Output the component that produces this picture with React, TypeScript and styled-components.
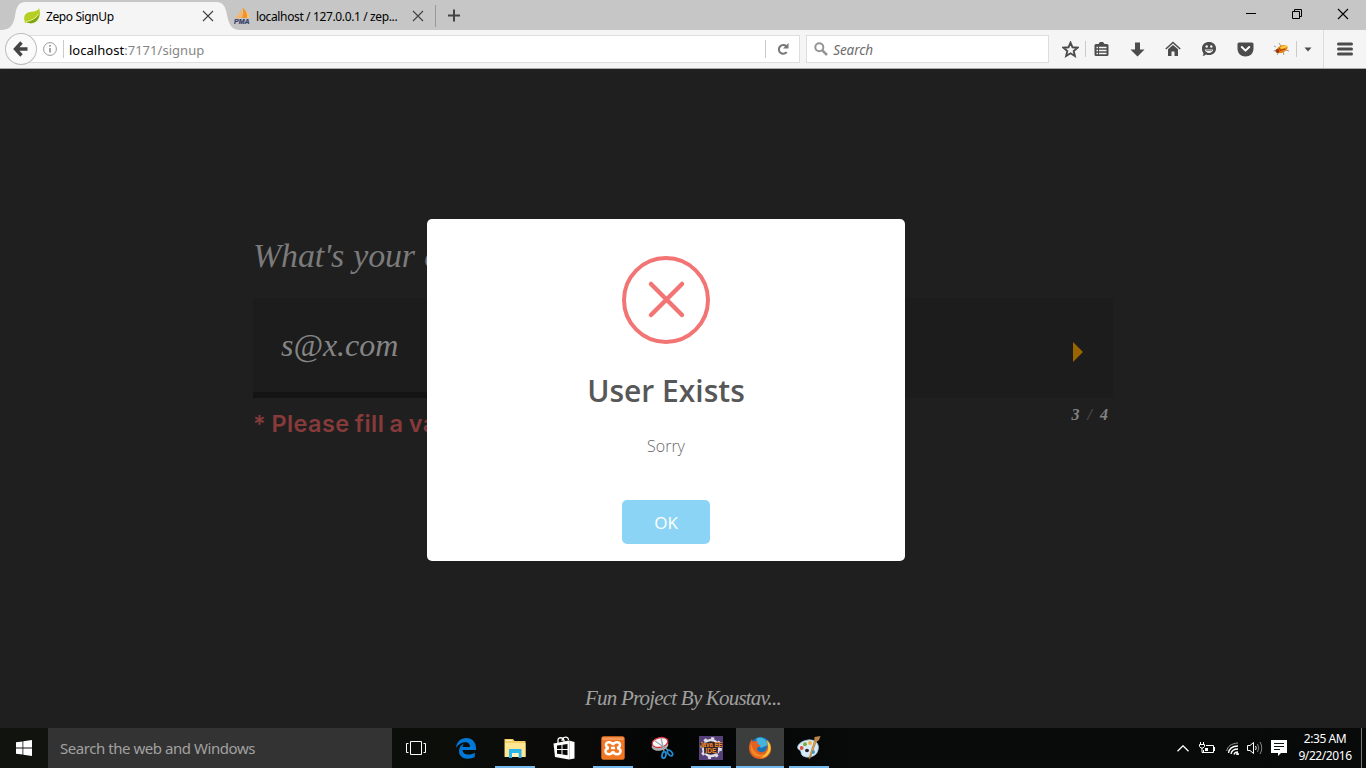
import React from 'react';
import styled, { createGlobalStyle } from 'styled-components';

const GlobalStyle = createGlobalStyle`
  * { box-sizing: border-box; }
  body { margin: 0; overflow: hidden; background: #1f1f1f; }
`;

const ui = `"Noto Sans", "Open Sans", sans-serif`;
const script = `"Liberation Serif", serif`;

const Screen = styled.div`
  width: 1366px;
  height: 768px;
  display: flex;
  flex-direction: column;
  font-family: ${ui};
  overflow: hidden;
`;

/* ---------- window title bar and tabs ---------- */
const TitleBar = styled.div`
  height: 30px;
  flex: none;
  background: #c6c6c6;
  display: flex;
`;

const Tab = styled.div<{ $width: number; $pad: number }>`
  position: relative;
  width: ${p => p.$width}px;
  height: 30px;
  padding-left: ${p => p.$pad}px;
  padding-top: 2px;
  display: flex;
  align-items: center;
  font-size: 12px;
  color: #000;
  white-space: nowrap;
`;

const TabShape = styled.svg`
  position: absolute;
  left: 0;
  top: 0;
`;

const TabTitle = styled.span<{ $width: number; $spacing: number }>`
  position: relative;
  width: ${p => p.$width}px;
  margin-left: 6px;
  letter-spacing: ${p => p.$spacing}px;
`;

const Glyph = styled.svg`
  position: relative;
  display: block;
  flex: none;
`;

const NewTab = styled.div`
  height: 22px;
  margin-top: 5px;
  padding: 4px 0 0 12px;
  border-left: 1px solid #999;
`;

const WindowButtons = styled.div`
  margin-left: auto;
  display: flex;
`;

const WindowButton = styled.div`
  width: 46px;
  height: 28px;
  display: grid;
  place-items: center;
`;

/* ---------- navigation bar ---------- */
const NavBar = styled.div`
  height: 39px;
  flex: none;
  display: flex;
  align-items: center;
  background: #f5f5f5;
  border-bottom: 1px solid #aaa;
`;

const BackButton = styled.div`
  position: relative;
  width: 32px;
  height: 32px;
  margin-left: 5px;
  border: 1px solid #bdbdbd;
  border-radius: 50%;
  background: #fafafa;
  display: grid;
  place-items: center;
  z-index: 1;
`;

const Field = styled.div<{ $width: number; $left: number; $pad: number }>`
  width: ${p => p.$width}px;
  height: 28px;
  margin-left: ${p => p.$left}px;
  padding-left: ${p => p.$pad}px;
  border: 1px solid #dedede;
  background: #fff;
  display: flex;
  align-items: center;
`;

const Rule = styled.i<{ $h: number; $ml?: number; $mr?: number; $light?: boolean }>`
  width: 1px;
  height: ${p => p.$h}px;
  margin-left: ${p => p.$ml || 0}px;
  margin-right: ${p => p.$mr || 0}px;
  background: ${p => (p.$light ? '#dcdcdc' : '#cbcbcb')};
  flex: none;
`;

const Address = styled.span`
  flex: 1;
  font-size: 13px;
  letter-spacing: 0.03px;
  color: #858585;
  padding-top: 1px;
  b { font-weight: 400; color: #000; }
`;

const Reload = styled.div`
  width: 33px;
  display: grid;
  place-items: center;
`;

const Placeholder = styled.span`
  margin-left: 5px;
  font: italic 13.5px ${ui};
  letter-spacing: -0.1px;
  color: #6d6d6d;
  padding-top: 1px;
`;

const Tools = styled.div`
  display: flex;
  align-items: center;
  height: 38px;
  margin-left: 12px;
`;

const Tool = styled.div<{ $w?: number }>`
  width: ${p => p.$w || 36}px;
  display: grid;
  place-items: center;
`;

/* ---------- web page ---------- */
const Page = styled.main`
  position: relative;
  height: 659px;
  flex: none;
  background: #1f1f1f;
  display: flex;
  flex-direction: column;
  padding: 160px 253px 0;
`;

const Question = styled.div`
  height: 69px;
  font: italic 34px/54px ${script};
  letter-spacing: -0.2px;
  word-spacing: 1px;
  color: #7b7b7b;
  white-space: nowrap;
`;

const Answer = styled.div`
  height: 94px;
  padding: 0 30px 0 28px;
  background: #1c1c1c;
  display: flex;
  align-items: center;
  justify-content: space-between;
  font: italic 32px/40px ${script};
  color: #858585;
`;

const ProgressTrack = styled.div`
  height: 6px;
  background: #1c1c1c;
`;

const Progress = styled.div`
  width: 50%;
  height: 6px;
  background: #141414;
`;

const Arrow = styled.i`
  margin-top: 14px;
  border-left: 10px solid #996300;
  border-top: 10px solid transparent;
  border-bottom: 10px solid transparent;
`;

const FormFoot = styled.div`
  display: flex;
  justify-content: space-between;
  padding: 8px 5px 0 0;
`;

const ErrorText = styled.span`
  font: 600 23.5px/36px Inter, sans-serif;
  letter-spacing: 0.4px;
  word-spacing: -1px;
  color: #873a3a;
  white-space: nowrap;
`;

const Counter = styled.span`
  font: italic bold 16px/18px ${script};
  color: #828282;
  display: flex;
  gap: 8px;
  i { color: #4b4b4b; }
`;

const Footer = styled.footer`
  margin-top: auto;
  height: 50px;
  text-align: center;
  font: italic 21px/40px ${script};
  letter-spacing: -0.8px;
  color: #a0a0a0;
`;

const Dialog = styled.section`
  position: absolute;
  left: 427px;
  top: 150px;
  width: 478px;
  height: 342px;
  border-radius: 5px;
  background: #fff;
  padding-top: 37px;
  display: flex;
  flex-direction: column;
  align-items: center;
  font-family: "Open Sans", sans-serif;
`;

const DialogTitle = styled.h2`
  margin: 27px 0 0;
  font-size: 30px;
  line-height: 40px;
  font-weight: 600;
  color: #575757;
`;

const DialogText = styled.p`
  margin: 25px 0 0;
  font-size: 16px;
  line-height: 20px;
  font-weight: 300;
  color: #686868;
`;

const OkButton = styled.button`
  margin-top: 44px;
  width: 88px;
  height: 44px;
  border: 0;
  border-radius: 5px;
  background: #8cd4f5;
  color: #fff;
  font: 400 17px "Open Sans", sans-serif;
`;

/* ---------- taskbar ---------- */
const Taskbar = styled.div`
  height: 40px;
  flex: none;
  display: flex;
  background: linear-gradient(90deg, #11130f 0, #0c0e09 400px, #0b0c0a 560px, #030404 660px, #090a0a 880px, #080a0a 1366px);
`;

const StartButton = styled.div`
  width: 48px;
  display: grid;
  place-items: center;
`;

const TaskSearch = styled.div`
  width: 344px;
  background: #333;
  color: #a1a1a1;
  font-size: 15px;
  line-height: 40px;
  padding-left: 12px;
  letter-spacing: -0.45px;
`;

const TaskList = styled.div`
  display: flex;
  gap: 1px;
`;

const Task = styled.div<{ $open?: boolean; $active?: boolean }>`
  width: 48px;
  display: flex;
  flex-direction: column;
  align-items: center;
  justify-content: space-between;
  padding-top: 8px;
  background: ${p => (p.$active ? '#3c3e3d' : 'transparent')};
  &:not(:first-child) {
    position: relative;
    left: 1px;
  }
  &::after {
    content: '';
    width: ${p => (p.$active ? 48 : 40)}px;
    height: 2px;
    background: ${p => (p.$open || p.$active ? '#76b9ed' : 'transparent')};
  }
`;

const Tray = styled.div`
  margin-left: auto;
  display: flex;
  align-items: center;
`;

const Clock = styled.div`
  width: 62px;
  margin-left: 1px;
  text-align: center;
  color: #fff;
  font-size: 12px;
  line-height: 17px;
  letter-spacing: -0.42px;
  padding-bottom: 2px;
`;

const ShowDesktop = styled.div`
  width: 5px;
  height: 40px;
  margin-left: 5px;
  border-left: 1px solid #777;
`;

const CloseX = ({ color = '#444', size = 12, w = 1.2 }) => (
  <Glyph width={size} height={size} viewBox="0 0 12 12" fill="none" stroke={color} strokeWidth={w}>
    <path d="M1 1L11 11M11 1L1 11" />
  </Glyph>
);

const LeafIcon = () => (
  <Glyph width="16" height="16" viewBox="0 0 16 16">
    <path d="M15.2 .3C16.600 5 16 10 13 13C10 16 5 15.500 2.200 14.500L1 15L.8 13.500C-.5 10 0 6.500 3.500 4.700C6.500 3.200 13 4.500 15.200 .3Z" fill="#b7cf22" />
    <path d="M2.500 13.800C7 13.300 12.500 11 15.300 6C15.300 10 12.500 14 8.500 15C6 15.500 3.700 15.200 2.500 13.800Z" fill="#7ba51a" />
    <path d="M2 13.600C7.500 12.500 12 10.500 14.300 6" fill="none" stroke="#edf3a2" strokeWidth=".8" />
  </Glyph>
);

const PmaIcon = () => (
  <Glyph width="16" height="16" viewBox="0 0 16 16">
    <path d="M6.500 1C8 4 8 7 7.500 10H1.500C4.500 8 6 5 6.500 1Z" fill="#fbb45f" />
    <path d="M8.500 0C12 2 13.500 6 13 10H8Q10 5 8.500 0Z" fill="#f7941d" />
    <path d="M12.500 3C15 5 16 8 15.500 10H13.500Z" fill="#fbc27a" />
    <text x="0" y="15.500" fontFamily="Liberation Sans" fontWeight="bold" fontStyle="italic" fontSize="6.500" fill="#38406a" stroke="#38406a" strokeWidth=".25" textLength="15.500" lengthAdjust="spacingAndGlyphs">PMA</text>
  </Glyph>
);

const Pen = '#4c4c4c';

const BrowserTools = () => (
  <Tools>
    <Tool $w={18}>
      <Glyph width="17" height="17" viewBox="0 0 17 17" fill="none" stroke={Pen} strokeWidth="1.9">
        <path d="M8.500 1.700L10.500 6.300L15.500 6.700L11.700 10L12.900 15L8.500 12.300L4.100 15L5.300 10L1.500 6.700L6.500 6.300Z" />
      </Glyph>
    </Tool>
    <Rule $h={16} $ml={6} $mr={-3} />
    <Tool $w={36}>
      <Glyph width="15" height="16" viewBox="0 0 15 16">
        <path d="M2 3H4.500L6 1H9L10.500 3H13Q14.500 3 14.500 4.500V13.500Q14.500 15 13 15H2Q.5 15 .5 13.500V4.500Q.5 3 2 3Z" fill={Pen} />
        <path d="M2.500 6.500H4M5 6.500H12.500M2.500 9.500H4M5 9.500H12.500M2.500 12.500H4M5 12.500H12.500" stroke="#f5f5f5" strokeWidth="1.600" />
      </Glyph>
    </Tool>
    <Tool>
      <Glyph width="15" height="15" viewBox="0 0 15 15"><path d="M5 .5H10V7.500H14.500L7.500 14.500L.5 7.500H5Z" fill={Pen} /></Glyph>
    </Tool>
    <Tool>
      <Glyph width="16" height="16" viewBox="0 0 16 16">
        <path d="M.8 8L8 1.500L15.200 8" fill="none" stroke={Pen} strokeWidth="1.5" />
        <path d="M3 8.300L8 3.900L13 8.300V15H9.500V10.500H6.500V15H3Z" fill={Pen} />
      </Glyph>
    </Tool>
    <Tool>
      <Glyph width="16" height="16" viewBox="0 0 16 16">
        <path d="M8 1C12 1 15 3.600 15 7.500S12 14 8 14C6.800 14 5.800 13.800 5 13.400C4 14.300 2.700 14.800 1.500 14.700C2.300 13.900 2.500 12.900 2.400 11.900C1.400 10.700 1 9.200 1 7.500C1 3.600 4 1 8 1Z" fill={Pen} />
        <path d="M3.800 8.500H12.200C11.500 13 4.500 13 3.800 8.500Z" fill="#f5f5f5" /><path d="M5 9.500H11" stroke={Pen} strokeWidth=".6" />
        <circle cx="5.700" cy="5.500" r="1.200" fill="#f5f5f5" /><circle cx="10.300" cy="5.500" r="1.200" fill="#f5f5f5" />
      </Glyph>
    </Tool>
    <Tool>
      <Glyph width="17" height="15" viewBox="0 0 17 15">
        <path d="M2 .5H15Q16.500.5 16.500 2V6.500C16.500 11.500 13 14.500 8.500 14.500S.5 11.500.5 6.500V2Q.5.5 2 .5Z" fill={Pen} />
        <path d="M4.800 5L8.500 8.600L12.200 5" fill="none" stroke="#fff" strokeWidth="2" strokeLinecap="round" strokeLinejoin="round" />
      </Glyph>
    </Tool>
    <Tool>
      <Glyph width="17" height="15" viewBox="0 0 17 15">
        <path d="M3 5L1 4M4 8L.5 9M6 10L4 13M10 10L11 13M13 8L16 9M8 4L6 1" stroke="#8b8170" strokeWidth=".8" />
        <ellipse cx="9" cy="7" rx="6" ry="3.500" transform="rotate(-25 9 7)" fill="#e98214" />
        <path d="M7 5.500L13.500 2.800L14 5L9 7Z" fill="#ffd13e" />
        <circle cx="4.500" cy="9" r="2" fill="#97370b" /><path d="M8 8L12 7M6 6L8 9" stroke="#9c3c08" />
      </Glyph>
    </Tool>
    <Rule $h={16} $ml={-3} />
    <Tool $w={21}>
      <Glyph width="8" height="5" viewBox="0 0 8 5"><path d="M.5.5H7.500L4 4.500Z" fill={Pen} /></Glyph>
    </Tool>
    <Rule $h={38} $ml={5} $light />
    <Tool $w={42}>
      <Glyph width="16" height="14" viewBox="0 0 16 14"><path d="M1.500 2H14.500M1.500 7H14.500M1.500 12H14.500" stroke={Pen} strokeWidth="3" strokeLinecap="round" /></Glyph>
    </Tool>
  </Tools>
);

const TaskIcons = () => (
  <TaskList>
    <Task>
      <Glyph width="24" height="24" viewBox="0 0 24 24" fill="none" stroke="#fff" strokeWidth="1">
        <path d="M6.500 5.500H17.500V18.500H6.500ZM4.500 7.500H2.500V16.500H4.500M19.500 7.500H21.500V16.500H19.500" />
      </Glyph>
    </Task>
    <Task>
      <Glyph width="24" height="24" viewBox="0 0 24 24">
        <path d="M2 11.800C2.700 5.800 6.600 2 12.300 2C18.500 2 22 6.500 22 12V14H8.500C8.700 17 11 18.500 14.500 18.500C17 18.500 19 17.800 20.800 16.700V21C18.800 22 16.500 22.700 13.500 22.700C8.500 22.700 5 19.700 5 15C5 11.500 6.800 8.900 9.900 7.400C8.900 8.600 8.600 9.700 8.500 10.900H16C16 8 14.500 6.200 11.400 6.200C7.700 6.200 4.500 8.200 2 11.800Z" fill="#0078d7" />
      </Glyph>
    </Task>
    <Task $open>
      <Glyph width="24" height="24" viewBox="0 0 24 24">
        <path d="M1.500 3H10L11.500 5H22.500V21H1.500Z" fill="#f5cf64" /><path d="M2 7H22.500V21H2Z" fill="#ffe694" />
        <path d="M3 4.500H9" stroke="#fff1bd" /><path d="M6 13H18.500V22H15.500V17H9V22H6Z" fill="#2ab6ec" /><path d="M9 17H15.500V21H9Z" fill="#fff0c0" />
      </Glyph>
    </Task>
    <Task>
      <Glyph width="24" height="24" viewBox="0 0 24 24">
        <path d="M6 7V4C6 1 11 .8 12 4.500V6M10 5C10.500 0 16.500 0 16.500 4" fill="none" stroke="#fff" strokeWidth="1.300" />
        <path d="M1.500 7.500L17 4.500L22.500 6V22.500L17 23.500L3 21Z" fill="#fff" />
        <path d="M5 9.500L9.500 8.900V13H5ZM10.500 8.700L15.500 8V13H10.500ZM5 14H9.500V18.300L5 17.700ZM10.500 14H15.500V19.200L10.500 18.500Z" fill="#080908" />
        <path d="M17.500 5V23" stroke="#999" strokeWidth=".5" />
      </Glyph>
    </Task>
    <Task $open>
      <Glyph width="24" height="24" viewBox="0 0 24 24">
        <rect x=".3" y=".3" width="23.400" height="23.400" rx="2.500" fill="#f17722" /><path d="M1.500 1.500H22.500V4H1.500Z" fill="#f59a5c" />
        <path d="M12 9.200C11.500 5.500 5 5 5 8.700C5 10.600 6 11.500 7.800 12C5.500 12.300 4.500 14 4.500 15.300C4.500 19.200 11 19.200 12 15.200C13 19.200 19.500 19.200 19.500 15.300C19.500 14 18.500 12.300 16.200 12C18 11.500 19 10.600 19 8.700C19 5 12.500 5.500 12 9.200ZM10 12H14" fill="none" stroke="#fff" strokeWidth="2.500" />
      </Glyph>
    </Task>
    <Task>
      <Glyph width="24" height="24" viewBox="0 0 24 24">
        <ellipse cx="10" cy="9.500" rx="8.500" ry="5" fill="#aeb0b2" transform="rotate(-12 10 9.500)" />
        <ellipse cx="10" cy="6.500" rx="8" ry="4.800" fill="#f7f7f7" stroke="#d7343d" strokeWidth="1.300" transform="rotate(-12 10 6.500)" />
        <path d="M5 5L18 14M11 2L14 15" stroke="#9ba7b3" strokeWidth="1.300" />
        <ellipse cx="14" cy="19" rx="1.900" ry="3.300" fill="none" stroke="#238ad0" strokeWidth="1.800" transform="rotate(12 14 19)" />
        <ellipse cx="20" cy="17" rx="1.900" ry="3.300" fill="none" stroke="#238ad0" strokeWidth="1.800" transform="rotate(-40 20 17)" />
      </Glyph>
    </Task>
    <Task $open>
      <Glyph width="24" height="24" viewBox="0 0 24 24">
        <rect width="24" height="24" fill="#564078" />
        <circle cx="12" cy="12" r="8" fill="#272330" stroke="#e1dee8" strokeWidth="2.300" />
        <circle cx="12" cy="12" r="9.700" fill="none" stroke="#e1dee8" strokeWidth="2.500" strokeDasharray="3 4.600" />
        <path d="M1 6.500H23V11.500H19V17.500H5V11.500H1Z" fill="#352331" opacity=".85" />
        <text x=".5" y="11.300" textLength="23" lengthAdjust="spacingAndGlyphs" fontFamily="Liberation Sans" fontWeight="bold" fontSize="7" fill="#f58a22">Java EE</text>
        <text x="6.500" y="17.300" textLength="11" lengthAdjust="spacingAndGlyphs" fontFamily="Liberation Sans" fontWeight="bold" fontSize="7.200" fill="#f58a22">IDE</text>
      </Glyph>
    </Task>
    <Task $active>
      <Glyph width="24" height="24" viewBox="0 0 24 24">
        <circle cx="12.500" cy="11.500" r="10.500" fill="#1672b9" /><path d="M9 2C14 0 19 4 20 9L13 12L8 6Z" fill="#42b5df" />
        <path d="M18.500 4C20 7 20 11 18 14C15.500 17.500 10.500 16.500 9 13.500C8.500 12 10 10.500 12 10.500L12.500 9L9 8L10 5.500C8 4.500 6 4.800 4.800 5.800L4 3C2 5.500 1 8.500 1 12C1 18.500 6 23 12.200 23C18.500 23 23 18.500 23.200 13C23.400 9 21.500 5.800 18.500 4Z" fill="#e66020" />
        <path d="M18.500 4C22.500 7 23.800 12 21.500 16.500C19 21 15 22 12 21.500C17 20 21 15 20 10C20 8 19.500 6 18.500 4Z" fill="#f9ca35" />
        <path d="M3 7C4 11 5 15 10 18C14 20 17 18 18 16C16 22 7 22 4 17C2.500 14 2.500 10 3 7Z" fill="#f28a23" />
      </Glyph>
    </Task>
    <Task $open>
      <Glyph width="24" height="24" viewBox="0 0 24 24">
        <path d="M11 4C18 3 23 8 21 14C20 20 12 23 6 20C3 18 5 15 2.500 14C-2 12 2 5 11 4Z" fill="#d9ebf6" stroke="#9ac3dc" strokeWidth=".8" />
        <circle cx="4.700" cy="12" r="1.900" fill="#de5044" /><circle cx="8" cy="8.300" r="2" fill="#76ae42" /><circle cx="13" cy="7" r="1.900" fill="#f5ae36" />
        <ellipse cx="10" cy="14.500" rx="2" ry="1.700" fill="#24282a" /><circle cx="16" cy="16" r="2" fill="#379ed5" />
        <path d="M19.500 5L13 22.500L12 23L12.300 21L17.500 4.500Z" fill="#dba353" stroke="#96602a" strokeWidth=".5" />
        <path d="M17.300 5L17.500 1L23.500 0L22 4L19.500 6Z" fill="#bb8347" />
      </Glyph>
    </Task>
  </TaskList>
);

export default function App() {
  return (
    <Screen>
      <GlobalStyle />
      <TitleBar>
        <Tab $width={234} $pad={24}>
          <TabShape width="242" height="30" viewBox="0 0 242 30"><path d="M2 30C11 29.500 13.500 24 15 16C16.500 6 19 2 26 2H216C223 2 225.500 6 227 15C229 25 232 30 240 30Z" fill="#f5f5f5" /></TabShape>
          <LeafIcon />
          <TabTitle $width={156} $spacing={-0.4}>Zepo SignUp</TabTitle>
          <CloseX />
        </Tab>
        <Tab $width={201} $pad={0}>
          <PmaIcon />
          <TabTitle $width={156} $spacing={-0.37}>localhost / 127.0.0.1 / zep...</TabTitle>
          <CloseX />
        </Tab>
        <NewTab><Glyph width="12" height="13" viewBox="0 0 12 13"><path d="M6 .5V12.500M0 6.500H12" stroke="#444" strokeWidth="2" /></Glyph></NewTab>
        <WindowButtons>
          <WindowButton><Glyph width="10" height="10"><path d="M0 4.500H10" stroke="#000" /></Glyph></WindowButton>
          <WindowButton><Glyph width="10" height="10" fill="none" stroke="#000"><path d="M.5 2.500H7.500V9.500H.5ZM2.500 2.500V.5H9.500V7.500H7.500" /></Glyph></WindowButton>
          <WindowButton><CloseX color="#000" size={12} w={1.1} /></WindowButton>
        </WindowButtons>
      </TitleBar>
      <NavBar>
        <BackButton>
          <Glyph width="15" height="16" viewBox="0 0 15 16" fill="none" stroke="#444" strokeWidth="3.400"><path d="M8.500 1.500L2.500 8L8.500 14.500M3 8H14.500" /></Glyph>
        </BackButton>
        <Field $width={780} $left={-16} $pad={21}>
          <Glyph width="14" height="14" viewBox="0 0 14 14"><circle cx="7" cy="7" r="6.400" fill="none" stroke="#999" /><path d="M7 6V10.500M7 3V4.700" stroke="#888" strokeWidth="1.500" /></Glyph>
          <Rule $h={18} $ml={6} $mr={5} />
          <Address><b>localhost</b>:7171/signup</Address>
          <Rule $h={18} />
          <Reload>
            <Glyph width="12" height="12" viewBox="0 0 12 12"><path d="M9.300 3.200A4.400 4.400 0 1 0 9.700 9.200" fill="none" stroke="#777" strokeWidth="2" /><path d="M11.500 0V5.500H6Z" fill="#777" /></Glyph>
          </Reload>
        </Field>
        <Field $width={243} $left={6} $pad={7}>
          <Glyph width="14" height="14" viewBox="0 0 14 14" fill="none" stroke="#959595" strokeWidth="2"><circle cx="5.300" cy="5.300" r="4" /><path d="M8.300 8.300L13 13" strokeWidth="2.500" /></Glyph>
          <Placeholder>Search</Placeholder>
        </Field>
        <BrowserTools />
      </NavBar>
      <Page>
        <Question>What's your email?</Question>
        <Answer>s@x.com<Arrow /></Answer>
        <ProgressTrack><Progress /></ProgressTrack>
        <FormFoot>
          <ErrorText>* Please fill a valid email</ErrorText>
          <Counter><span>3</span><i>/</i><span>4</span></Counter>
        </FormFoot>
        <Footer>Fun Project By Koustav...</Footer>
        <Dialog>
          <Glyph width="88" height="88" viewBox="0 0 88 88" fill="none" stroke="#f27474">
            <circle cx="44" cy="44" r="42" strokeWidth="4" /><path d="M29 28L60 59M60 28L29 59" strokeWidth="4.500" strokeLinecap="round" />
          </Glyph>
          <DialogTitle>User Exists</DialogTitle>
          <DialogText>Sorry</DialogText>
          <OkButton>OK</OkButton>
        </Dialog>
      </Page>
      <Taskbar>
        <StartButton>
          <Glyph width="16" height="16" viewBox="0 0 16 16"><path d="M0 2.300L6.500 1.400V7.500H0ZM7.300 1.300L16 0V7.500H7.300ZM0 8.400H6.500V14.600L0 13.700ZM7.300 8.400H16V16L7.300 14.700Z" fill="#fff" /></Glyph>
        </StartButton>
        <TaskSearch>Search the web and Windows</TaskSearch>
        <TaskIcons />
        <Tray>
          <Tool $w={24}><Glyph width="12" height="7" viewBox="0 0 12 7"><path d="M.5 6.300L6 .8L11.500 6.300" fill="none" stroke="#fff" strokeWidth="1.300" /></Glyph></Tool>
          <Tool $w={24}>
            <Glyph width="16" height="13" viewBox="0 0 16 13" fill="none" stroke="#fff"><path d="M7 3.500H14.500V10.500H4.500V8M15.500 5V9M1.500 0V2M4.500 0V2M.5 2.500H5.500V4.500L4 6H2L.5 4.500ZM3 6V10.500H5" /><path d="M6 6H9V9H6Z" fill="#fff" stroke="none" /></Glyph>
          </Tool>
          <Tool $w={26}>
            <Glyph width="13" height="13" viewBox="0 0 13 13" fill="none" stroke="#fff"><path d="M.7 9C1.500 4.500 5 1.500 12 1" stroke="#999" /><path d="M2.500 11C3 7 6 4.200 12 4M5 12C5.500 9 8 7 12 7M8 12.500C8.300 11 9.500 10 12 10" strokeWidth="1.300" /><circle cx="11.500" cy="12" r="1" fill="#fff" /></Glyph>
          </Tool>
          <Tool $w={20}>
            <Glyph width="16" height="14" viewBox="0 0 16 14" fill="none" stroke="#fff"><path d="M.5 4.500H3L6.500 1.500V12.500L3 9.500H.5ZM8.500 5Q10 7 8.500 9" /><path d="M10.500 3Q13 7 10.500 11M13 1Q16.500 7 13 13" stroke="#858585" /></Glyph>
          </Tool>
          <Tool $w={28}>
            <Glyph width="16" height="16" viewBox="0 0 16 16"><path d="M0 0H16V13H10L7 16V13H0Z" fill="#fff" /><path d="M3 3.500H13M3 6.500H13M3 9.500H9" stroke="#111" /></Glyph>
          </Tool>
          <Clock>2:35 AM<br />9/22/2016</Clock>
          <ShowDesktop />
        </Tray>
      </Taskbar>
    </Screen>
  );
}
